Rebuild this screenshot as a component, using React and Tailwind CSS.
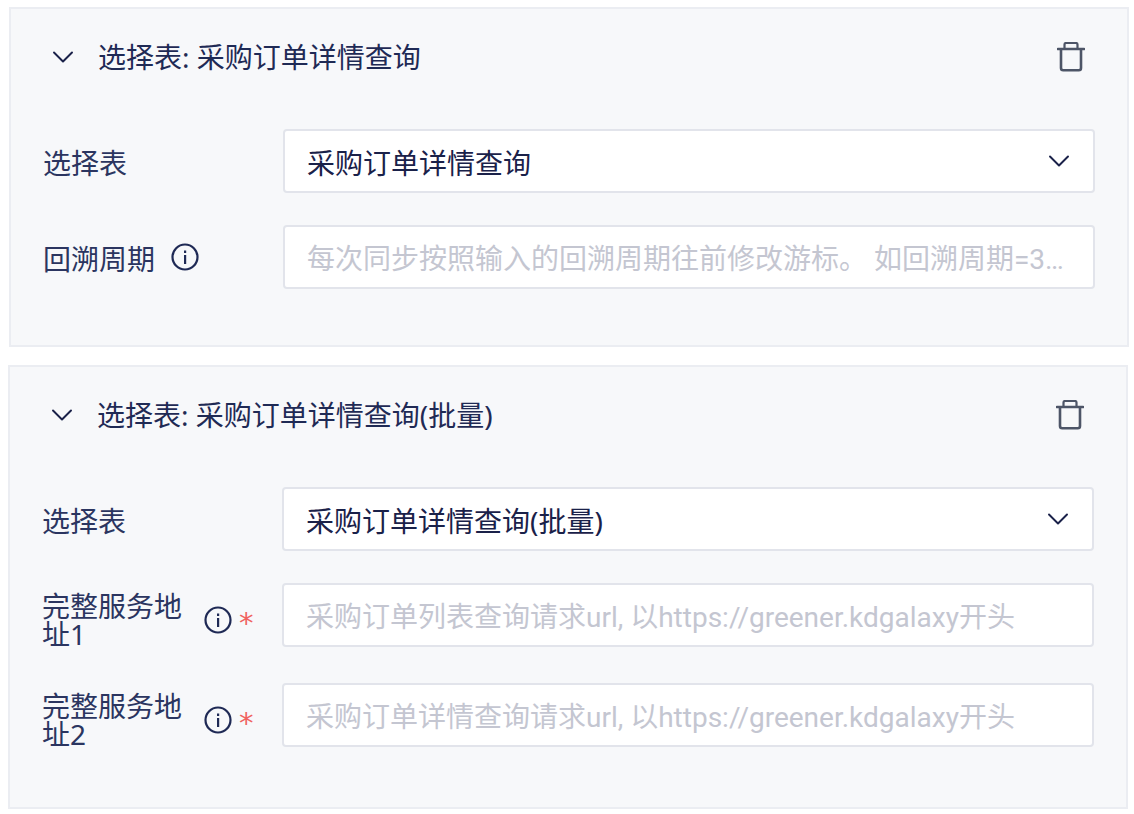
import React from 'react';
import { ChevronDown } from 'lucide-react';

const FONT = "font-['Noto_Sans','Noto_Sans_CJK_SC',sans-serif]";

function InfoIcon() {
  return (
    <svg width="28" height="28" viewBox="0 0 28 28" fill="none" className="shrink-0 text-[#1f2a55]">
      <circle cx="14" cy="14" r="12.5" stroke="currentColor" strokeWidth="2.2" />
      <rect x="13" y="12" width="2.2" height="9" fill="currentColor" />
      <rect x="13" y="7.5" width="2.2" height="2.5" fill="currentColor" />
    </svg>
  );
}

function TrashIcon() {
  return (
    <svg width="28" height="30" viewBox="0 0 28 30" fill="none" className="text-[#4d5567]">
      <path d="M1 7h26" stroke="currentColor" strokeWidth="2.6" strokeLinecap="round" />
      <path d="M7.5 6V2.6C7.5 1.7 8.2 1 9.1 1h9.8c.9 0 1.6.7 1.6 1.6V6" stroke="currentColor" strokeWidth="2.2" />
      <path d="M4 7v19c0 1.2 1 2.2 2.2 2.2h15.6c1.2 0 2.2-1 2.2-2.2V7" stroke="currentColor" strokeWidth="2.6" />
    </svg>
  );
}

function Card({ title, className, children }) {
  return (
    <section className={`w-[1120px] border-2 border-[#ebedf2] bg-[#f7f8fa] px-8 ${className}`}>
      <div className="flex h-[96px] items-center justify-between">
        <div className="flex items-center">
          <ChevronDown size={36} strokeWidth={1.3} className="ml-[2px] text-[#1a2149]" />
          <span className="ml-[17px] text-[28px] text-[#1f2a55]">{title}</span>
        </div>
        <div className="mr-[10px] flex">
          <TrashIcon />
        </div>
      </div>
      {children}
    </section>
  );
}

function Row({ label, info, required, wrap, className, children }) {
  return (
    <div className={`flex items-center ${className || ''}`}>
      <div className={`flex w-[240px] shrink-0 items-center ${wrap ? 'translate-y-[5px]' : ''}`}>
        <span className={`text-[28px] text-[#2b3560] ${wrap ? 'w-[146px] leading-[28px]' : 'pt-[4px]'}`}>{label}</span>
        {info ? (
          <span className="ml-4 flex">
            <InfoIcon />
          </span>
        ) : null}
        {required ? (
          <span className="ml-[7px] mt-[7px] font-['DejaVu_Sans',sans-serif] text-[29px] leading-none text-[#f0635f]">*</span>
        ) : null}
      </div>
      {children}
    </div>
  );
}

function SelectBox({ value }) {
  return (
    <div className="flex h-[64px] w-[812px] items-center justify-between rounded-[4px] border-2 border-[#e2e4eb] bg-white pl-[22px] pr-[16px]">
      <span className="pt-[4px] text-[28px] text-[#1a2149]">{value}</span>
      <ChevronDown size={36} strokeWidth={1.3} className="text-[#1a2149]" />
    </div>
  );
}

function TextBox({ placeholder }) {
  return (
    <div className="flex h-[64px] w-[812px] items-center rounded-[4px] border-2 border-[#e2e4eb] bg-white pl-[22px] pr-[22px]">
      <span className="truncate pt-[6px] font-['Roboto','Noto_Sans_CJK_SC',sans-serif] text-[28px] text-[#c4c6d1]">{placeholder}</span>
    </div>
  );
}

export default function App() {
  return (
    <div className={`h-[814px] w-[1134px] overflow-hidden bg-white pt-[7px] ${FONT}`}>
      <Card title="选择表: 采购订单详情查询" className="ml-[9px] h-[340px] pt-0">
        <div className="mt-6 flex flex-col gap-8">
          <Row label="选择表">
            <SelectBox value="采购订单详情查询" />
          </Row>
          <Row label="回溯周期" info>
            <TextBox placeholder="每次同步按照输入的回溯周期往前修改游标。 如回溯周期=3天，则每次同步时游标往前移动" />
          </Row>
        </div>
      </Card>
      <Card title="选择表: 采购订单详情查询(批量)" className="ml-2 mt-[18px] h-[444px]">
        <div className="mt-6 flex flex-col">
          <Row label="选择表">
            <SelectBox value="采购订单详情查询(批量)" />
          </Row>
          <Row label="完整服务地址1" info required wrap className="mt-8">
            <TextBox placeholder="采购订单列表查询请求url, 以https://greener.kdgalaxy开头" />
          </Row>
          <Row label="完整服务地址2" info required wrap className="mt-9">
            <TextBox placeholder="采购订单详情查询请求url, 以https://greener.kdgalaxy开头" />
          </Row>
        </div>
      </Card>
    </div>
  );
}
